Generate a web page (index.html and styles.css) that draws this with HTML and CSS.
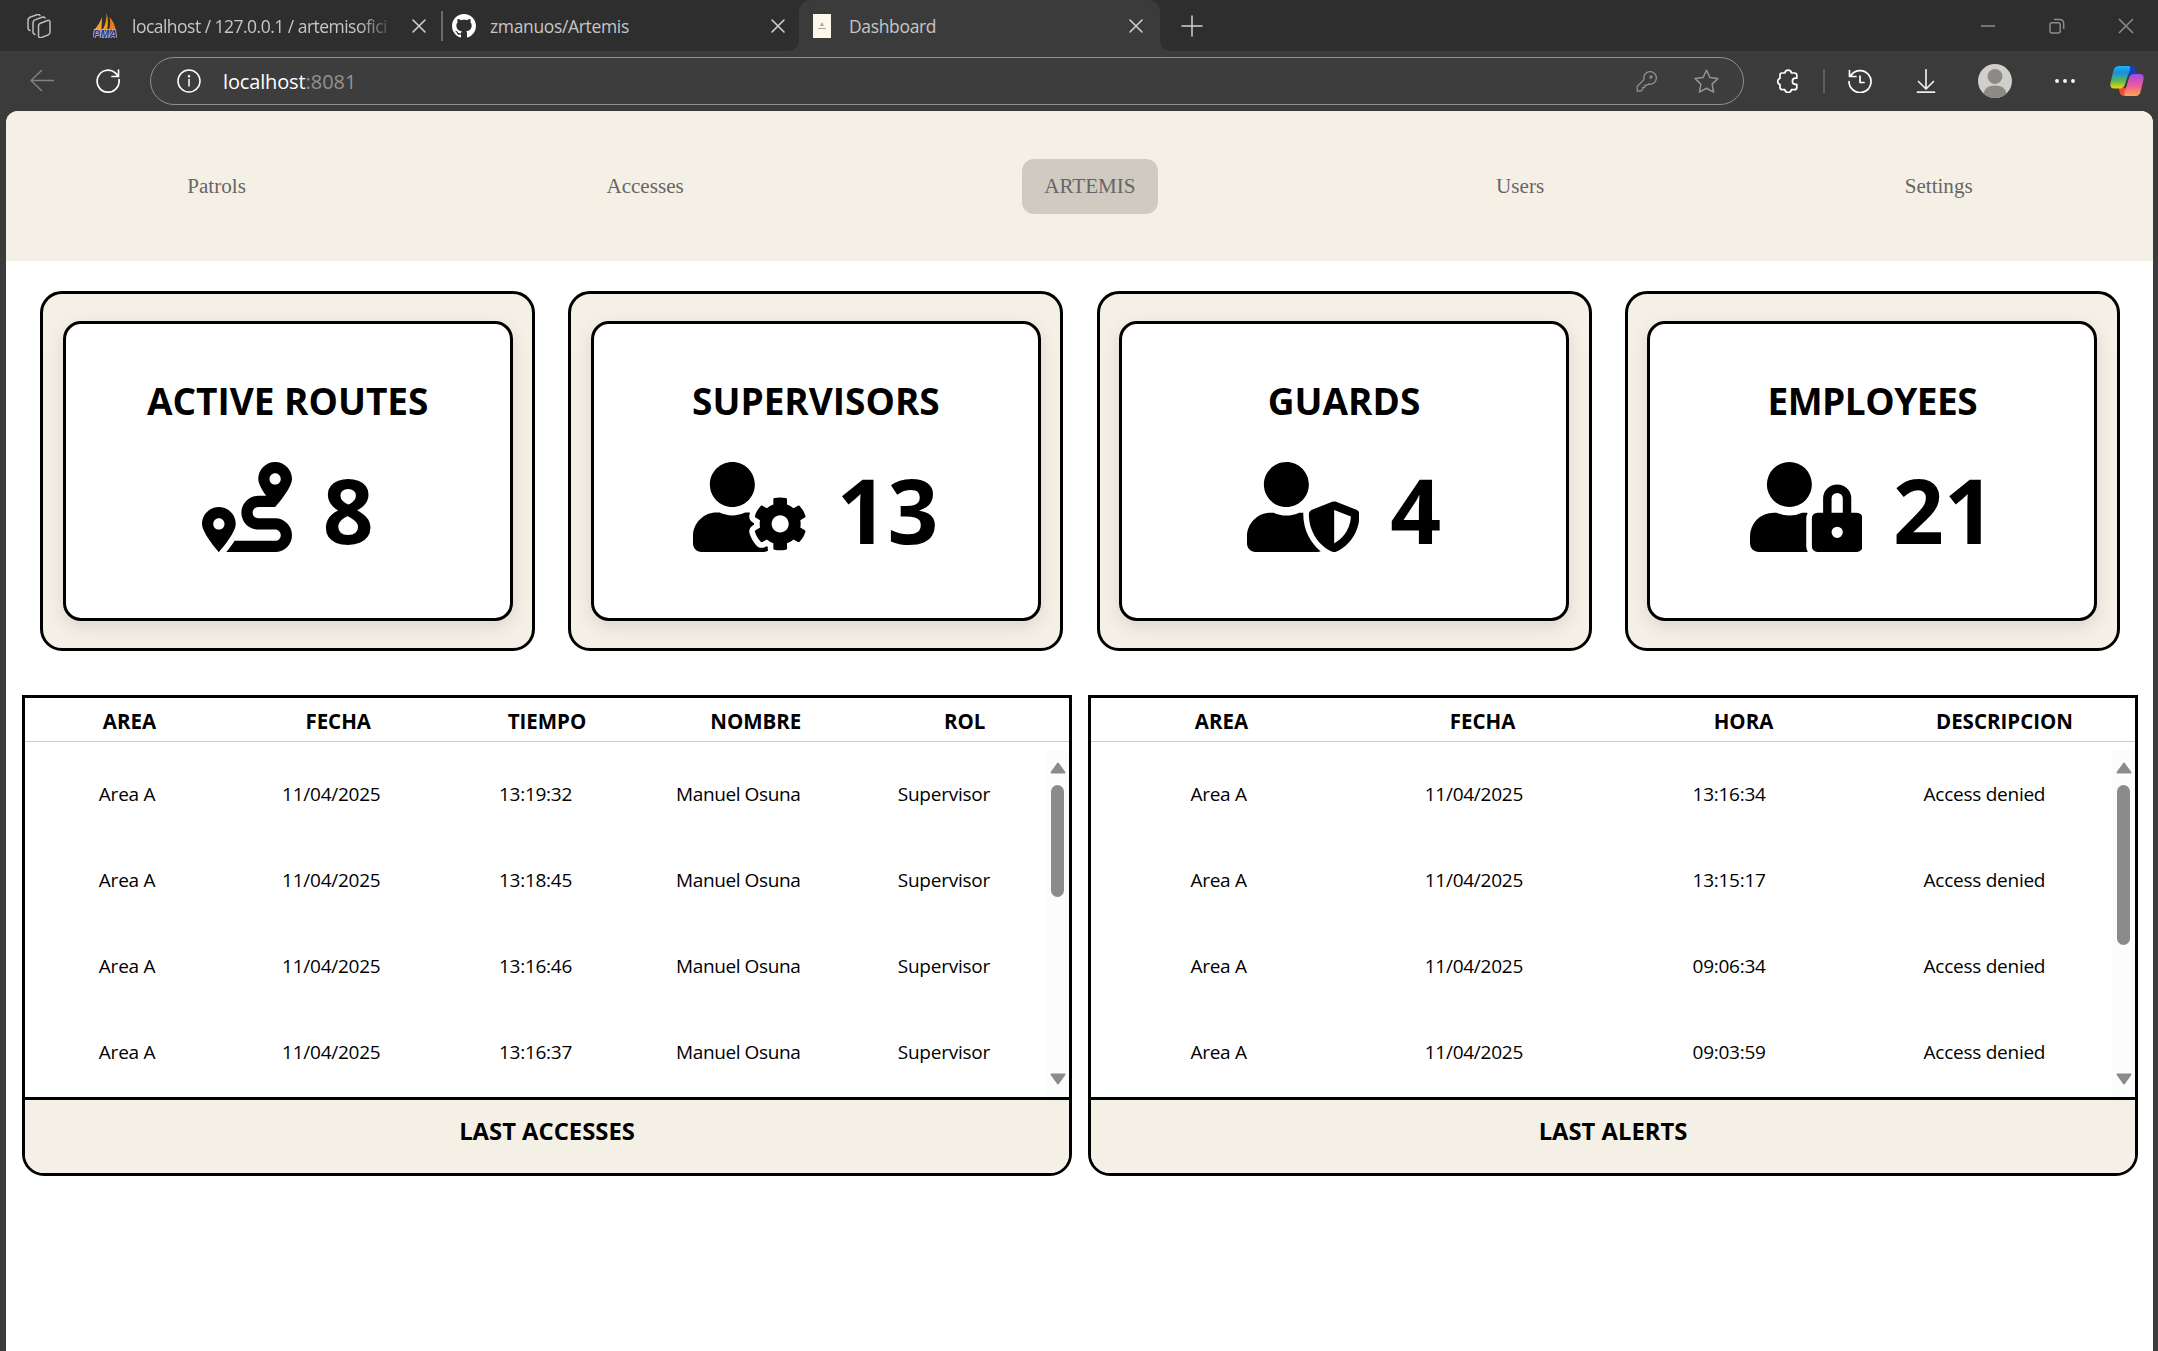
FILE: index.html
```html
<!DOCTYPE html>
<html lang="en">
<head>
<meta charset="utf-8">
<title>Dashboard</title>
<link rel="stylesheet" href="styles.css">
</head>
<body>
<svg class="defs" width="0" height="0">
  <symbol id="x" viewBox="0 0 16 16"><path d="M2 2l12 12M14 2L2 14" fill="none" stroke="currentColor" stroke-width="1.6" stroke-linecap="round"/></symbol>
  <symbol id="up" viewBox="0 0 16 12"><path d="M8 1.5L14.5 10.5H1.5Z" fill="#8b8b8b" stroke="#8b8b8b" stroke-width="2" stroke-linejoin="round"/></symbol>
</svg>

<header class="tabs">
  <svg class="workspace" width="24" height="24" viewBox="0 0 24 24" fill="none" stroke="#bdbdbd" stroke-width="1.5" stroke-linejoin="round" stroke-linecap="round"><path d="M13.500 9.200L20.500 6.500Q23 5.800 23 8.500V18Q23 20.200 21 21L14 23.600Q11.500 24.200 11.500 21.500V11.500Q11.500 9.900 13.500 9.200Z"/><path d="M8 20.500Q6 20 6 17.500V9Q6 6.500 8.500 5.600L15 3.300Q17.500 2.700 18 4"/><path d="M3 16.500Q1 16 1 13.500V6.500Q1 4 3.500 3L10 .8Q12.500 .2 13 1.500"/></svg>
  <div class="tab tab-pma">
    <svg width="24" height="25" viewBox="0 0 24 25"><path d="M9 4L8.500 17H1Q6 12 9 4Z" fill="#f5a033"/><path d="M13.500 0Q16 8 14 17H9.500Q14 9 13.500 0Z" fill="#f89c0e"/><path d="M16.500 4Q22 10 22.500 17H16Q18 10 16.500 4Z" fill="#e07f1c"/><text x="0" y="24.500" class="pma-text" textLength="24" lengthAdjust="spacingAndGlyphs">PMA</text></svg>
    <span class="tab-title">localhost / 127.0.0.1 / artemisofici</span>
    <svg class="close" width="16" height="16"><use href="#x"/></svg>
  </div>
  <span class="tab-sep"></span>
  <div class="tab tab-git">
    <svg width="24" height="24" viewBox="0 0 16 16" fill="#fff"><path d="M8 0C3.580 0 0 3.580 0 8c0 3.540 2.290 6.530 5.470 7.590.4.070.550-.170.550-.380 0-.190-.010-.820-.010-1.490-2.010.370-2.530-.490-2.690-.940-.090-.230-.480-.940-.820-1.130-.280-.150-.680-.520-.010-.530.630-.010 1.080.580 1.230.820.720 1.210 1.870.870 2.330.660.070-.520.280-.870.510-1.070-1.780-.2-3.640-.890-3.640-3.950 0-.870.310-1.590.820-2.150-.080-.2-.360-1.020.080-2.120 0 0 .670-.210 2.200.820.640-.180 1.320-.270 2-.270s1.360.090 2 .270c1.530-1.040 2.200-.820 2.200-.820.440 1.100.160 1.920.080 2.120.510.560.820 1.270.820 2.150 0 3.070-1.870 3.750-3.650 3.950.290.250.540.730.540 1.480 0 1.070-.010 1.930-.010 2.200 0 .210.150.460.550.380A8.010 8.010 0 0016 8c0-4.420-3.580-8-8-8z"/></svg>
    <span>zmanuos/Artemis</span>
    <svg class="close" width="16" height="16"><use href="#x"/></svg>
  </div>
  <div class="tab tab-active">
    <span class="favicon"><svg width="8" height="8" viewBox="0 0 8 8"><path d="M4 0L6 4H2Z M0 6H8V7H0Z" fill="#a9a59b"/></svg></span>
    <span>Dashboard</span>
    <svg class="close" width="16" height="16"><use href="#x"/></svg>
  </div>
  <svg class="plus" width="22" height="22" viewBox="0 0 22 22"><path d="M11 1V21M1 11H21" stroke="#d0d0d0" stroke-width="1.500" stroke-linecap="round"/></svg>
  <div class="window">
    <svg width="16" height="16" viewBox="0 0 16 16"><path d="M1 8H15" stroke="#8c8c8c" stroke-width="1.500"/></svg>
    <svg width="16" height="16" viewBox="0 0 16 16" fill="none" stroke="#8c8c8c" stroke-width="1.500"><rect x="1" y="4.800" width="10.200" height="10.200" rx="2"/><path d="M5 1.500H10.500Q14.700 1.500 14.700 5.700V11"/></svg>
    <svg width="16" height="16" viewBox="0 0 16 16"><path d="M1 1L15 15M15 1L1 15" stroke="#8c8c8c" stroke-width="1.500"/></svg>
  </div>
</header>

<div class="toolbar">
  <svg width="24" height="24" viewBox="0 0 24 24" fill="none" stroke="#828282" stroke-width="1.500" stroke-linecap="round"><path d="M1 11.500H23.500M11.500 1.500L1 11.500L11.500 21.500"/></svg>
  <svg class="reload" width="24" height="24" viewBox="0 0 24 24" fill="none" stroke="#fff" stroke-width="1.700" stroke-linecap="round" stroke-linejoin="round"><path d="M23 10.500A11 11 0 1 1 19 3.600L22.500 7.500M22.500 1.200V7.500H16"/></svg>
  <div class="address">
    <svg width="24" height="24" viewBox="0 0 24 24" fill="none" stroke="#fff" stroke-width="1.500" stroke-linecap="round"><circle cx="12" cy="12" r="11"/><path d="M12 10.500V17"/><circle cx="12" cy="7.200" r=".5"/></svg>
    <span class="url">localhost<span class="port">:8081</span></span>
    <svg class="key" width="21" height="21" viewBox="0 0 21 21" fill="none" stroke="#8b8b8b" stroke-width="1.400" stroke-linejoin="round"><path d="M8 8.500A6.300 6.300 0 1 1 12.500 13L10.800 14.300H8.800V16.500H6.600V18.500L5 20H1.200V15.600Z"/><circle cx="15" cy="6" r="1"/></svg>
    <svg width="25" height="25" viewBox="0 0 24 24" fill="none" stroke="#949494" stroke-width="1.450" stroke-linejoin="round"><path d="M12 1.200L15.300 8.200L22.900 9.200L17.400 14.500L18.800 22.200L12 18.500L5.200 22.200L6.600 14.500L1.100 9.200L8.700 8.200Z"/></svg>
  </div>
  <svg class="puzzle" width="24" height="24" viewBox="0 0 24 24" fill="none" stroke="#fff" stroke-width="1.700" stroke-linejoin="round"><path d="M5.800 4H8.800A3.400 3.400 0 0 1 15.500 4H18.500Q20.800 4 20.800 6.200V9.200H19.500A3.100 3.100 0 0 0 19.500 15.400H20.800V18.400Q20.800 20.700 18.500 20.700H15.500A3.400 3.400 0 0 1 8.800 20.700H6.300Q4 20.700 4 18.400V15.600A3.400 3.400 0 0 1 4 9.200V6Q4 4 5.800 4Z"/></svg>
  <span class="bar-sep"></span>
  <svg class="history" width="24" height="24" viewBox="0 0 24 24" fill="none" stroke="#fff" stroke-width="1.700" stroke-linecap="round" stroke-linejoin="round"><path d="M1 12.500A11 11 0 1 0 2.500 7M1.500 1.500V7.500H8M12 7V13.500H16"/></svg>
  <svg class="download" width="24" height="24" viewBox="0 0 24 24" fill="none" stroke="#ededed" stroke-width="1.700" stroke-linecap="round" stroke-linejoin="round"><path d="M12 .8V19.500M4.500 12.500L12 20L19.500 12.500M3.500 23.200H20.500"/></svg>
  <svg class="avatar" width="34" height="34" viewBox="0 0 34 34"><circle cx="17" cy="17" r="17" fill="#d0cfcc"/><circle cx="17" cy="12.500" r="7.400" fill="#8d8a86"/><path d="M5.500 29.500Q7 21.500 17 21.500T28.500 29.500A17 17 0 0 1 5.500 29.500Z" fill="#8d8a86"/></svg>
  <svg class="dots" width="22" height="6" viewBox="0 0 22 6" fill="#fff"><circle cx="3" cy="3" r="1.900"/><circle cx="11" cy="3" r="1.900"/><circle cx="19" cy="3" r="1.900"/></svg>
  <svg class="copilot" width="34" height="32" viewBox="0 0 34 32">
    <defs>
      <linearGradient id="cl" x1="0" y1="0" x2="0" y2="1"><stop offset="0" stop-color="#21b2f0"/><stop offset=".3" stop-color="#178fdc"/><stop offset=".65" stop-color="#56b75c"/><stop offset="1" stop-color="#f5d800"/></linearGradient>
      <linearGradient id="cr" x1="0" y1="0" x2="0" y2="1"><stop offset="0" stop-color="#a04be8"/><stop offset=".5" stop-color="#ed57a0"/><stop offset="1" stop-color="#fda64c"/></linearGradient>
    </defs>
    <path d="M15 1H21Q24.500 1 25.600 5L26.800 9.500H22Q19 9.500 18 13L15 6Z" fill="#1240c4"/>
    <path d="M9 23H15L18 27L19 31H14Q10.500 31 9.500 27Z" fill="#f4483a"/>
    <path d="M8.500 1H18.500Q21 1 19.800 5L15 19.500Q13.800 23.500 10 23.500H4Q-.5 23.500 .5 18L3 7Q4.200 1 8.500 1Z" fill="url(#cl)"/>
    <path d="M25.500 31H16Q13.300 31 14.400 27.500L19 13Q20 9 24 9H30Q34.500 9 33.500 14.500L31 25Q30 31 25.500 31Z" fill="url(#cr)"/>
    <path d="M18 10.500H20.500Q19 11 18.300 13.500L15.800 22H13.500Q14.700 21.500 15.300 19.500Z" fill="#3b3b3b"/>
  </svg>
</div>

<main class="page">
  <nav class="nav">
    <a class="nav-link">Patrols</a>
    <a class="nav-link">Accesses</a>
    <a class="nav-link current">ARTEMIS</a>
    <a class="nav-link">Users</a>
    <a class="nav-link">Settings</a>
  </nav>

  <section class="cards">
    <article class="card"><div class="card-inner">
      <h2 class="card-title">ACTIVE ROUTES</h2>
      <div class="card-value"><svg width="90" height="90" viewBox="0 0 512 512"><path d="M416 320h-96c-17.600 0-32-14.400-32-32s14.400-32 32-32h96s96-107 96-160-43-96-96-96-96 43-96 96c0 25.500 22.200 63.400 45.300 96H320c-52.900 0-96 43.100-96 96s43.100 96 96 96h96c17.600 0 32 14.400 32 32s-14.400 32-32 32H185.500c-16 24.800-33.800 47.700-47.300 64H416c52.900 0 96-43.100 96-96s-43.100-96-96-96zm0-256c17.700 0 32 14.300 32 32s-14.300 32-32 32-32-14.300-32-32 14.300-32 32-32zM96 256c-53 0-96 43-96 96s96 160 96 160 96-107 96-160-43-96-96-96zm0 128c-17.700 0-32-14.300-32-32s14.300-32 32-32 32 14.300 32 32-14.300 32-32 32z"/></svg><span class="number">8</span></div>
    </div></article>
    <article class="card"><div class="card-inner">
      <h2 class="card-title">SUPERVISORS</h2>
      <div class="card-value"><svg width="112.5" height="90" viewBox="0 0 640 512"><path d="M610.500 373.300c2.600-14.100 2.600-28.500 0-42.600l25.800-14.900c3-1.700 4.300-5.200 3.300-8.500-6.700-21.600-18.200-41.200-33.200-57.400-2.300-2.500-6-3.100-9-1.400l-25.800 14.900c-10.900-9.300-23.400-16.500-36.900-21.300v-29.800c0-3.400-2.400-6.400-5.700-7.100-22.300-5-45-4.800-66.200 0-3.300.7-5.700 3.700-5.700 7.100v29.800c-13.500 4.800-26 12-36.900 21.300l-25.800-14.900c-2.900-1.700-6.700-1.100-9 1.400-15 16.200-26.500 35.800-33.200 57.400-1 3.300.4 6.800 3.300 8.500l25.800 14.900c-2.600 14.100-2.600 28.500 0 42.600l-25.800 14.900c-3 1.700-4.300 5.200-3.300 8.500 6.700 21.600 18.200 41.100 33.200 57.400 2.300 2.500 6 3.100 9 1.400l25.800-14.900c10.900 9.300 23.400 16.500 36.900 21.300v29.800c0 3.400 2.400 6.400 5.700 7.100 22.300 5 45 4.800 66.200 0 3.300-.7 5.700-3.700 5.700-7.100v-29.800c13.500-4.800 26-12 36.900-21.300l25.800 14.900c2.900 1.700 6.700 1.100 9-1.400 15-16.200 26.500-35.800 33.200-57.400 1-3.300-.4-6.800-3.300-8.500l-25.800-14.900zM496 400.500c-26.800 0-48.500-21.800-48.500-48.500s21.800-48.500 48.500-48.500 48.500 21.800 48.500 48.500-21.700 48.500-48.500 48.500zM224 256c70.700 0 128-57.300 128-128S294.700 0 224 0 96 57.300 96 128s57.300 128 128 128zm201.200 226.500c-2.300-1.200-4.600-2.600-6.800-3.900l-7.900 4.600c-6 3.400-12.800 5.300-19.600 5.300-10.900 0-21.400-4.600-28.900-12.600-18.300-19.800-32.300-43.900-40.200-69.600-5.500-17.700 1.900-36.400 17.900-45.700l7.900-4.600c-.1-2.600-.1-5.200 0-7.800l-7.900-4.600c-16-9.200-23.400-28-17.900-45.700.9-2.900 2.200-5.800 3.200-8.700-3.800-.3-7.500-1.200-11.400-1.200h-16.700c-22.200 10.200-46.900 16-72.900 16s-50.600-5.800-72.900-16h-16.700C60.200 288 0 348.200 0 422.400V464c0 26.500 21.500 48 48 48h352c10.100 0 19.500-3.200 27.200-8.500-1.200-3.800-2-7.700-2-11.800v-9.200z"/></svg><span class="number">13</span></div>
    </div></article>
    <article class="card"><div class="card-inner">
      <h2 class="card-title">GUARDS</h2>
      <div class="card-value"><svg width="112.5" height="90" viewBox="0 0 640 512"><path d="M622.300 271.100l-115.200-45c-4.100-1.600-12.600-3.700-22.200 0l-115.200 45c-10.700 4.200-17.700 14-17.700 24.900 0 111.600 68.700 188.800 132.900 213.900 9.600 3.700 18 1.600 22.200 0C558.400 489.900 640 420.500 640 296c0-10.900-7-20.700-17.700-24.900zM496 462.400V273.300l95.500 37.300c-5.600 87.100-60.900 135.400-95.500 151.800zM224 256c70.700 0 128-57.300 128-128S294.700 0 224 0 96 57.300 96 128s57.300 128 128 128zm96 40c0-2.500.8-4.800 1.100-7.200-2.500-.1-4.900-.8-7.500-.8h-16.700c-22.200 10.200-46.900 16-72.900 16s-50.600-5.800-72.900-16h-16.700C60.200 288 0 348.200 0 422.400V464c0 26.500 21.500 48 48 48h352c6.800 0 13.300-1.500 19.200-4-54-42.900-99.200-116.700-99.200-212z"/></svg><span class="number">4</span></div>
    </div></article>
    <article class="card"><div class="card-inner">
      <h2 class="card-title tight">EMPLOYEES</h2>
      <div class="card-value"><svg width="112.5" height="90" viewBox="0 0 640 512"><path d="M224 256A128 128 0 1 0 96 128a128 128 0 0 0 128 128zm96 64a63.080 63.080 0 0 1 8.100-30.500c-4.800-.5-9.500-1.500-14.500-1.500h-16.700a174.080 174.080 0 0 1-145.800 0h-16.700A134.430 134.430 0 0 0 0 422.400V464a48 48 0 0 0 48 48h280.900a63.540 63.540 0 0 1-8.900-32zm288-32h-32v-80a80 80 0 0 0-160 0v80h-32a32 32 0 0 0-32 32v160a32 32 0 0 0 32 32h224a32 32 0 0 0 32-32V320a32 32 0 0 0-32-32zM496 432a32 32 0 1 1 32-32 32 32 0 0 1-32 32zm32-144h-64v-80a32 32 0 0 1 64 0z"/></svg><span class="number">21</span></div>
    </div></article>
  </section>

  <section class="panels">
    <article class="panel five">
      <div class="head"><span>AREA</span><span>FECHA</span><span>TIEMPO</span><span>NOMBRE</span><span>ROL</span></div>
      <div class="body">
        <div class="rows">
          <div class="row"><span>Area A</span><span>11/04/2025</span><span>13:19:32</span><span class="name">Manuel Osuna</span><span>Supervisor</span></div>
          <div class="row"><span>Area A</span><span>11/04/2025</span><span>13:18:45</span><span class="name">Manuel Osuna</span><span>Supervisor</span></div>
          <div class="row"><span>Area A</span><span>11/04/2025</span><span>13:16:46</span><span class="name">Manuel Osuna</span><span>Supervisor</span></div>
          <div class="row"><span>Area A</span><span>11/04/2025</span><span>13:16:37</span><span class="name">Manuel Osuna</span><span>Supervisor</span></div>
        </div>
        <div class="scroll"><svg width="16" height="12"><use href="#up"/></svg><span class="thumb"></span><svg class="down" width="16" height="12"><use href="#up"/></svg></div>
      </div>
      <h3 class="foot">LAST ACCESSES</h3>
    </article>
    <article class="panel four">
      <div class="head"><span>AREA</span><span>FECHA</span><span>HORA</span><span>DESCRIPCION</span></div>
      <div class="body">
        <div class="rows">
          <div class="row"><span>Area A</span><span>11/04/2025</span><span>13:16:34</span><span>Access denied</span></div>
          <div class="row"><span>Area A</span><span>11/04/2025</span><span>13:15:17</span><span>Access denied</span></div>
          <div class="row"><span>Area A</span><span>11/04/2025</span><span>09:06:34</span><span>Access denied</span></div>
          <div class="row"><span>Area A</span><span>11/04/2025</span><span>09:03:59</span><span>Access denied</span></div>
        </div>
        <div class="scroll"><svg width="16" height="12"><use href="#up"/></svg><span class="thumb tall"></span><svg class="down" width="16" height="12"><use href="#up"/></svg></div>
      </div>
      <h3 class="foot">LAST ALERTS</h3>
    </article>
  </section>
</main>
</body>
</html>
```

FILE: styles.css
```css
* { box-sizing: border-box; }
html, body { height: 100%; margin: 0; }
body {
  display: flex;
  flex-direction: column;
  overflow: hidden;
  background: #3b3b3b;
  font-family: "Open Sans", "Noto Sans", sans-serif;
  color: #000;
}
svg { display: block; flex: none; }
h2, h3 { margin: 0; }
.defs { position: absolute; }

/* Tab strip */
.tabs {
  flex: none;
  display: flex;
  align-items: center;
  height: 51px;
  padding: 0 24px 0 27px;
  background: #2e2e2e;
  color: #c6c6c6;
  font-size: 17.5px;
  letter-spacing: -0.35px;
}
.tab { display: flex; align-items: center; height: 51px; white-space: nowrap; }
.close { margin-left: auto; color: #cfcfcf; }
.tab-pma { margin-left: 42px; width: 348px; gap: 15px; padding-right: 14px; }
.tab-title {
  width: 268px;
  letter-spacing: -0.52px;
  -webkit-mask-image: linear-gradient(90deg, #000 86%, transparent);
  mask-image: linear-gradient(90deg, #000 86%, transparent);
}
.pma-text { font: bold italic 11px "Liberation Sans", sans-serif; fill: #34367c; stroke: #b9bbe4; stroke-width: 1.6px; paint-order: stroke; letter-spacing: 0; }
.tab-sep { width: 2px; height: 30px; background: #6a6a6a; }
.tab-git { width: 356px; gap: 14px; padding: 0 13px 0 9px; }
.tab-active {
  position: relative;
  width: 361px;
  gap: 18px;
  padding: 0 16px 0 14px;
  border-radius: 12px 12px 0 0;
  background: #3b3b3b;
}
.tab-active::before, .tab-active::after {
  content: "";
  position: absolute;
  bottom: 0;
  width: 10px;
  height: 10px;
}
.tab-active::before { left: -10px; background: radial-gradient(circle at 0 0, #2e2e2e 9.5px, #3b3b3b 10px); }
.tab-active::after { right: -10px; background: radial-gradient(circle at 100% 0, #2e2e2e 9.5px, #3b3b3b 10px); }
.favicon { display: flex; align-items: center; justify-content: center; width: 18px; height: 24px; background: #fcf8ec; }
.plus { margin-left: 21px; }
.window { display: flex; gap: 53px; margin-left: auto; }

/* Toolbar */
.toolbar { flex: none; display: flex; align-items: center; height: 60px; padding-left: 30px; }
.reload { margin-left: 42px; }
.address {
  display: flex;
  align-items: center;
  width: 1594px;
  height: 48px;
  margin-left: 30px;
  padding: 0 24px 0 26px;
  border: 1.5px solid #8f8f8f;
  border-radius: 24px;
  background: #3d3d3d;
}
.url { margin-left: 22px; color: #fff; font-size: 20px; letter-spacing: -0.15px; }
.port { color: #929292; letter-spacing: 0; }
.key { margin: 0 37px 0 auto; }
.puzzle { margin-left: 32px; }
.bar-sep { width: 1.5px; height: 24px; margin-left: 23px; background: #5e5e5e; }
.history { margin-left: 23px; }
.download { margin-left: 42px; }
.avatar { margin-left: 40px; }
.dots { margin-left: 42px; }
.copilot { margin-left: 34px; }

/* Page */
.page {
  flex: 1;
  min-height: 0;
  width: 2147px;
  margin-left: 6px;
  border-radius: 12px 12px 0 0;
  overflow: hidden;
  background: #fff;
}
.nav {
  display: flex;
  align-items: center;
  justify-content: space-around;
  height: 150px;
  padding-left: 1px;
  background: #f5f0e5;
  font: 21.1px/25px "Liberation Serif", "Times New Roman", serif;
}
.nav-link { padding: 15px 22.5px; border-radius: 12px; color: #666; }
.current { background: #d0cbc1; }

.cards { display: flex; justify-content: space-evenly; padding: 30px 0 0 1px; }
.card {
  width: 495px;
  height: 360px;
  padding: 27px 19.5px;
  border: 3px solid #000;
  border-radius: 22px;
  background: #f5f0e5;
}
.card-inner {
  display: flex;
  flex-direction: column;
  align-items: center;
  height: 300px;
  padding-top: 52px;
  border: 3px solid #000;
  border-radius: 18px;
  background: #fff;
  box-shadow: 0 6px 18px rgba(0, 0, 0, 0.1);
}
.card-title { font-size: 37px; line-height: 50px; font-weight: 700; white-space: nowrap; }
.tight { letter-spacing: -0.5px; }
.card-value { display: flex; align-items: center; gap: 31px; height: 90px; margin-top: 36px; }
.number { margin-top: 5px; font-size: 89px; line-height: 90px; font-weight: 700; }

.panels { display: flex; gap: 16px; padding: 44px 15px 0 16px; }
.panel {
  width: 1050px;
  border: 3px solid #000;
  border-radius: 0 0 22px 22px;
  overflow: hidden;
}
.head, .row { display: grid; align-items: center; text-align: center; white-space: nowrap; }
.five .head, .five .row { grid-template-columns: repeat(5, 1fr); }
.four .head, .four .row { grid-template-columns: repeat(4, 1fr); }
.head {
  height: 44px;
  padding-top: 3px;
  border-bottom: 1px solid #ccc;
  font-size: 20.5px;
  font-weight: 700;
}
.body { display: flex; height: 355px; padding-top: 8px; }
.rows { flex: 1; padding-top: 0.5px; }
.row { height: 86px; font-size: 19px; letter-spacing: -0.25px; }
.name { letter-spacing: -0.4px; padding-right: 3px; }
.scroll {
  display: flex;
  flex-direction: column;
  align-items: center;
  width: 23px;
  padding: 12px 0;
  background: #fcfcfc;
}
.thumb { width: 13px; height: 112px; margin-top: 11px; border-radius: 7px; background: #8b8b8b; }
.tall { height: 160px; }
.down { margin-top: auto; transform: rotate(180deg); }
.foot {
  height: 76px;
  padding-top: 15px;
  border-top: 3px solid #000;
  background: #f5f0e5;
  font-size: 23.8px;
  line-height: 33px;
  font-weight: 700;
  text-align: center;
}
```
